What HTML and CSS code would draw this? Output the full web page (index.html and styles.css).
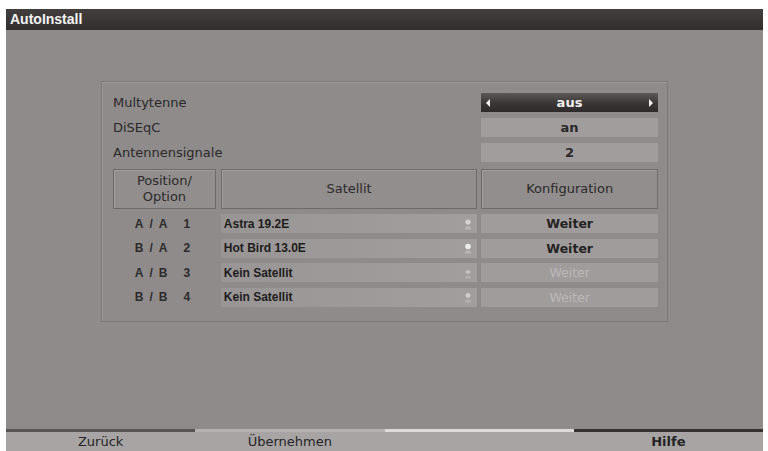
FILE: index.html
```html
<!DOCTYPE html>
<html>
<head>
<meta charset="utf-8">
<link rel="stylesheet" href="styles.css">
</head>
<body>
<div class="screen">
  <div class="titlebar">AutoInstall</div>
  <div class="main">
    <div class="panel">
      <div class="row">
        <div class="label">Multytenne</div>
        <div class="value selector">
          <svg class="arr" width="6" height="10" viewBox="0 0 6 10"><path d="M5 1 L1 5 L5 9 Z" fill="#f2f2f2"/></svg>
          <span>aus</span>
          <svg class="arr" width="6" height="10" viewBox="0 0 6 10"><path d="M1 1 L5 5 L1 9 Z" fill="#f2f2f2"/></svg>
        </div>
      </div>
      <div class="row">
        <div class="label">DiSEqC</div>
        <div class="value">an</div>
      </div>
      <div class="row">
        <div class="label">Antennensignale</div>
        <div class="value">2</div>
      </div>
      <div class="head">
        <div class="hcell c1">Position/<br>Option</div>
        <div class="hcell c2">Satellit</div>
        <div class="hcell c3">Konfiguration</div>
      </div>
      <div class="data">
        <div class="pos c1"><span>A</span><span>/</span><span>A</span><span class="n">1</span></div>
        <div class="sat c2"><span>Astra 19.2E</span><svg class="ico" width="10" height="14" viewBox="0 0 10 14"><path d="M2 11 Q5 7 8 11 L8 12.5 L2 12.5 Z" fill="#b9b5b5"/><circle cx="5" cy="5" r="2.6" fill="#d6d2d2"/></svg></div>
        <div class="cfg c3">Weiter</div>
      </div>
      <div class="data">
        <div class="pos c1"><span>B</span><span>/</span><span>A</span><span class="n">2</span></div>
        <div class="sat c2"><span>Hot Bird 13.0E</span><svg class="ico" width="10" height="14" viewBox="0 0 10 14"><path d="M2 11 Q5 7 8 11 L8 12.5 L2 12.5 Z" fill="#b9b5b5"/><circle cx="5" cy="5.5" r="2.8" fill="#ecebeb"/></svg></div>
        <div class="cfg c3">Weiter</div>
      </div>
      <div class="data">
        <div class="pos c1"><span>A</span><span>/</span><span>B</span><span class="n">3</span></div>
        <div class="sat c2"><span>Kein Satellit</span><svg class="ico" width="10" height="14" viewBox="0 0 10 14"><path d="M2 11 Q5 8 8 11 L8 12.5 L2 12.5 Z" fill="#b3afaf"/><ellipse cx="5" cy="6" rx="2.6" ry="1.8" fill="#c9c5c5"/></svg></div>
        <div class="cfg c3 off">Weiter</div>
      </div>
      <div class="data">
        <div class="pos c1"><span>B</span><span>/</span><span>B</span><span class="n">4</span></div>
        <div class="sat c2"><span>Kein Satellit</span><svg class="ico" width="10" height="14" viewBox="0 0 10 14"><path d="M2 11 Q5 7 8 11 L8 12.5 L2 12.5 Z" fill="#b3afaf"/><circle cx="5" cy="5.5" r="2.4" fill="#cfcbcb"/></svg></div>
        <div class="cfg c3 off">Weiter</div>
      </div>
    </div>
  </div>
  <div class="footer">
    <div class="btn b1">Zurück</div>
    <div class="btn b2">Übernehmen</div>
    <div class="btn b3"></div>
    <div class="btn b4">Hilfe</div>
  </div>
</div>
</body>
</html>
```
FILE: styles.css
```css
html, body {
  margin: 0;
  padding: 0;
  background: #ffffff;
}
body {
  font-family: "DejaVu Sans", "Liberation Sans", sans-serif;
  width: 768px;
  height: 451px;
  overflow: hidden;
}
.screen {
  margin: 9px 0 0 6px;
  width: 757px;
  height: 442px;
  display: flex;
  flex-direction: column;
  background: #8f8b8b;
}
.titlebar {
  flex-shrink: 0;
  height: 21px;
  background: linear-gradient(#443f3f, #322e2e);
  color: #f4f4f4;
  font-family: "Liberation Sans", Arial, sans-serif;
  font-size: 14px;
  font-weight: bold;
  line-height: 21px;
  padding-left: 4px;
}
.main {
  flex: 1;
  padding: 51px 0 0 95px;
}
.panel {
  width: 545px;
  border: 1px solid #7c7878;
  box-shadow: inset 1px 1px 0 #9d9999;
  padding: 11px 9px 9px 11px;
  display: flex;
  flex-direction: column;
}
.panel > * { flex-shrink: 0; }
.row {
  height: 19px;
  display: flex;
  align-items: center;
  margin-bottom: 6px;
}
.label {
  flex: 1;
  font-size: 13px;
  color: #2a2828;
}
.value {
  width: 177px;
  height: 19px;
  background: #a19d9d;
  color: #2a2828;
  font-size: 13px;
  font-weight: bold;
  text-align: center;
  line-height: 19px;
}
.selector {
  background: linear-gradient(#5e5959, #3a3636 55%, #2e2a2a);
  color: #f0f0f0;
  display: flex;
  align-items: center;
  justify-content: space-between;
  padding: 0 4px;
  box-sizing: border-box;
}
.head {
  margin-top: 1px;
  height: 40px;
  display: flex;
  margin-bottom: 5px;
}
.c1 { width: 103px; margin-right: 5px; }
.c2 { width: 257px; margin-right: 4px; }
.c3 { width: 177px; }
.hcell {
  box-sizing: border-box;
  border: 1px solid #6e6a6a;
  box-shadow: inset 1px 1px 0 #a29e9e;
  background: #928e8e;
  display: flex;
  align-items: center;
  justify-content: center;
  text-align: center;
  font-size: 13px;
  color: #2c2a2a;
  line-height: 16px;
}
.data {
  height: 19px;
  display: flex;
  margin-bottom: 5.5px;
  font-size: 12px;
}
.pos {
  display: flex;
  justify-content: center;
  align-items: center;
  color: #2c2a2a;
  font-family: "Liberation Sans", Arial, sans-serif;
  font-weight: bold;
  gap: 6px;
  box-sizing: border-box;
  padding-right: 4px;
}
.pos .n { margin-left: 10px; }
.sat {
  background: linear-gradient(90deg, #999595, #a29e9e);
  box-sizing: border-box;
  padding: 0 4px 0 3px;
  display: flex;
  align-items: center;
  justify-content: space-between;
  color: #1e1c1c;
  font-family: "Liberation Sans", Arial, sans-serif;
  font-weight: bold;
}
.cfg {
  background: #a09c9c;
  text-align: center;
  line-height: 19px;
  font-size: 12.5px;
  font-weight: bold;
  color: #242222;
}
.cfg.off {
  color: #bcb8b8;
  font-weight: normal;
}
.footer {
  flex-shrink: 0;
  height: 22px;
  display: flex;
}
.btn {
  flex: 1;
  background: #a8a4a4;
  font-size: 13px;
  color: #262424;
  text-align: center;
  line-height: 19px;
  border-top: 3px solid;
}
.b1 { border-color: #585454; }
.b2 { border-color: #b4b0b0; }
.b3 { border-color: #dedada; }
.b4 { border-color: #363232; font-weight: bold; }
```
